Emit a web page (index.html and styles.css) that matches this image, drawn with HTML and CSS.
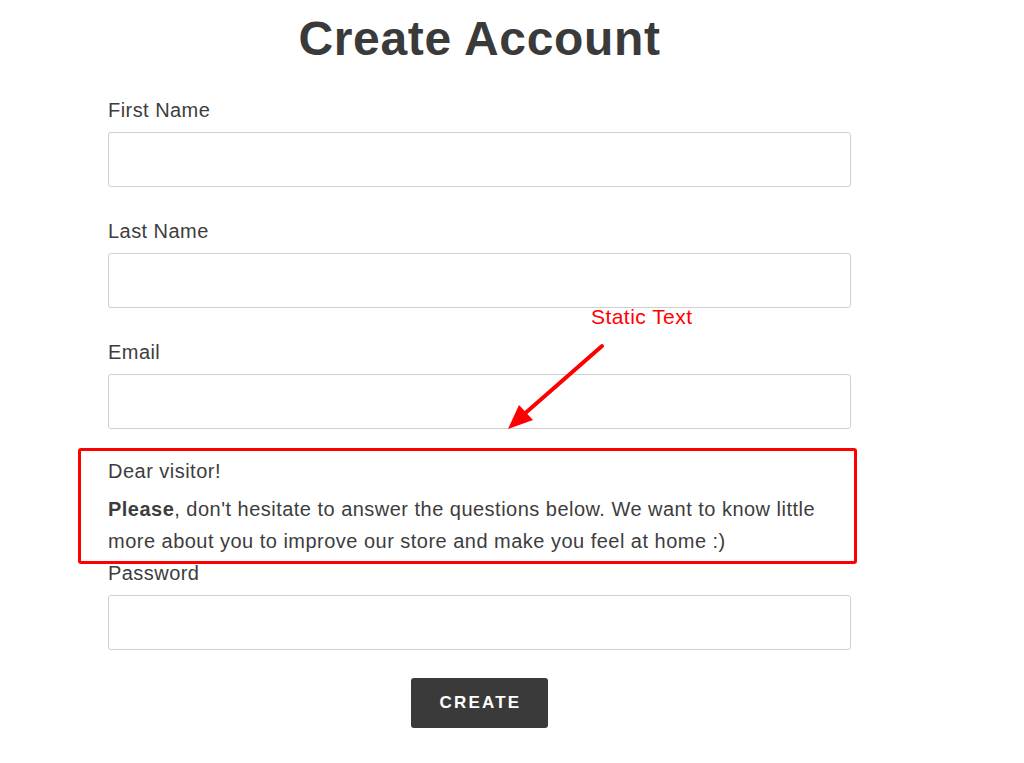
FILE: index.html
```html
<!DOCTYPE html>
<html lang="en">
<head>
<meta charset="utf-8">
<title>Create Account</title>
<link rel="stylesheet" href="styles.css">
</head>
<body>
<div class="page">
  <main class="form-wrap">
    <h1 class="title">Create Account</h1>
    <form class="form">
      <label class="label" for="fn">First Name</label>
      <input class="input" id="fn" type="text">
      <label class="label" for="ln">Last Name</label>
      <input class="input" id="ln" type="text">
      <label class="label" for="em">Email</label>
      <input class="input" id="em" type="email">
      <div class="static">
        <p class="static-p">Dear visitor!</p>
        <p class="static-p static-second"><strong>Please</strong>, don't hesitate to answer the questions below. We want to know little more about you to improve our store and make you feel at home :)</p>
      </div>
      <label class="label" for="pw">Password</label>
      <input class="input" id="pw" type="password">
      <div class="actions">
        <button class="btn" type="button">Create</button>
      </div>
    </form>
  </main>
  <div class="note-box"></div>
  <div class="note-text">Static Text</div>
  <svg class="note-arrow" width="1024" height="763" viewBox="0 0 1024 763">
    <line x1="602" y1="346" x2="522" y2="416" stroke="#ff0000" stroke-width="4" stroke-linecap="round"/>
    <polygon points="508,429 519,405 533,420" fill="#ff0000"/>
  </svg>
</div>
</body>
</html>
```

FILE: styles.css
```css
* { box-sizing: border-box; }
html, body {
  margin: 0;
  padding: 0;
  background: #ffffff;
}
body {
  font-family: "Liberation Sans", Arial, sans-serif;
  color: #3d3d3d;
}
.page {
  position: relative;
  width: 1024px;
  height: 763px;
  overflow: hidden;
}
.form-wrap {
  width: 743px;
  margin-left: 108px;
  padding-top: 10px;
}
.title {
  margin: 0 0 27px;
  font-size: 48px;
  line-height: 57px;
  font-weight: 700;
  letter-spacing: 0.65px;
  text-align: center;
  color: #3a3a3a;
}
.form {
  display: flex;
  flex-direction: column;
}
.label {
  display: block;
  font-size: 20px;
  line-height: 32px;
  letter-spacing: 0.45px;
  margin-bottom: 6px;
}
.input {
  display: block;
  width: 100%;
  height: 55px;
  border: 1px solid #cfcfcf;
  border-radius: 3px;
  background: #fff;
  margin: 0 0 28px;
  font: inherit;
}
.static {
  margin-top: -2px;
  font-size: 20px;
  line-height: 32px;
  letter-spacing: 0.48px;
  width: 720px;
}
.static-p {
  margin: 0;
}
.static-second {
  margin-top: 6px;
}
.static strong {
  font-weight: 700;
}
.actions {
  display: flex;
  justify-content: center;
}
.btn {
  width: 137px;
  height: 50px;
  border: none;
  border-radius: 3px;
  background: #3a3a3a;
  color: #ffffff;
  font-family: "Liberation Sans", Arial, sans-serif;
  font-size: 17px;
  font-weight: 700;
  letter-spacing: 2.2px;
  text-transform: uppercase;
  padding: 0 0 0 2px;
}
.note-box {
  position: absolute;
  left: 78px;
  top: 448px;
  width: 779px;
  height: 116px;
  border: 3px solid #ff0000;
  border-radius: 3px;
  pointer-events: none;
}
.note-text {
  position: absolute;
  left: 591px;
  top: 304px;
  font-size: 21px;
  line-height: 26px;
  letter-spacing: 0.45px;
  color: #ff0000;
}
.note-arrow {
  position: absolute;
  left: 0;
  top: 0;
  pointer-events: none;
}
```
